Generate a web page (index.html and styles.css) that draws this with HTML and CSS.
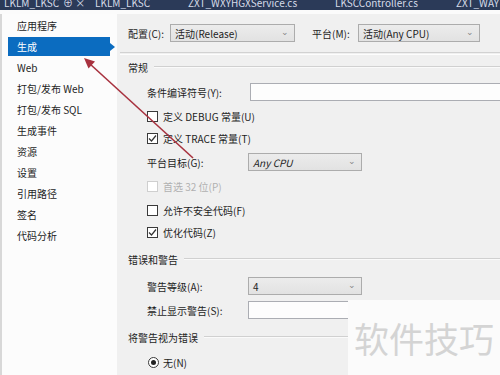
FILE: index.html
```html
<html>
<head>
<title>项目属性</title>
<link rel="stylesheet" href="styles.css">
</head>
<body>
<div class="page">
  <div class="tabs">
    <span class="tab t1">LKLM_LKSC</span>
    <span class="tab t2">⊕ ×</span>
    <span class="tab t3">LKLM_LKSC</span>
    <span class="tab t4">ZXT_WXYHGXService.cs</span>
    <span class="tab t5">LKSCController.cs</span>
    <span class="tab t6">ZXT_WAY</span>
  </div>
  <div class="strip"></div>
  <div class="content">
    <div class="side">
      <div class="item">应用程序</div>
      <div class="item sel">生成<span class="pointer"></span></div>
      <div class="item">Web</div>
      <div class="item">打包/发布 Web</div>
      <div class="item">打包/发布 SQL</div>
      <div class="item">生成事件</div>
      <div class="item">资源</div>
      <div class="item">设置</div>
      <div class="item">引用路径</div>
      <div class="item">签名</div>
      <div class="item">代码分析</div>
    </div>
    <div class="main">
      <div class="toprow">
        <span class="lbl-c">配置(C):</span>
        <div class="combo w-conf"><span>活动(Release)</span><span class="chev">⌄</span></div>
        <span class="lbl-m">平台(M):</span>
        <div class="combo w-plat"><span>活动(Any CPU)</span><span class="chev">⌄</span></div>
      </div>
      <div class="sep"></div>

      <div class="head h1"><span>常规</span><span class="line"></span></div>
      <div class="row r-cond"><span class="lbl">条件编译符号(Y):</span><div class="text w-cond"></div></div>
      <div class="row r6"><span class="box"></span><span>定义 DEBUG 常量(U)</span></div>
      <div class="row r4"><span class="box"><svg width="9" height="9" viewBox="0 0 9 9"><path d="M1 4.5 L3.5 7 L8 1.5" fill="none" stroke="#333" stroke-width="1.2"/></svg></span><span>定义 TRACE 常量(T)</span></div>
      <div class="row r6"><span class="lbl">平台目标(G):</span><div class="combo w-small"><span class="it">Any CPU</span><span class="chev">⌄</span></div></div>
      <div class="row r6 off"><span class="box"></span><span>首选 32 位(P)</span></div>
      <div class="row r6"><span class="box"></span><span>允许不安全代码(F)</span></div>
      <div class="row r4"><span class="box"><svg width="9" height="9" viewBox="0 0 9 9"><path d="M1 4.5 L3.5 7 L8 1.5" fill="none" stroke="#333" stroke-width="1.2"/></svg></span><span>优化代码(Z)</span></div>

      <div class="head h2"><span>错误和警告</span><span class="line"></span></div>
      <div class="row r11"><span class="lbl">警告等级(A):</span><div class="combo w-small"><span>4</span><span class="chev">⌄</span></div></div>
      <div class="row r6"><span class="lbl">禁止显示警告(S):</span><div class="text w-warn"></div></div>

      <div class="head h3"><span>将警告视为错误</span><span class="line"></span></div>
      <div class="row r9"><span class="radio"><span class="dot"></span></span><span>无(N)</span></div>
    </div>
  </div>

  <svg class="arrow" width="500" height="375" viewBox="0 0 500 375">
    <line x1="193" y1="158" x2="90" y2="64" stroke="#a8323f" stroke-width="1.6"/>
    <path d="M84 58 L95 61.5 L88.5 68.5 Z" fill="#a8323f"/>
  </svg>
  <div class="mark">软件技巧</div>
</div>
</body>
</html>
```
FILE: styles.css
```css
body{margin:0;
font-family:"Noto Sans CJK SC","Noto Sans",sans-serif;
font-size:10px;
color:#1e1e1e;}
.page{position:relative;width:500px;height:375px;overflow:hidden;background:#f0f0f0;}

.tabs{height:10px;background:#2b3a58;overflow:hidden;position:relative;}
.tab{position:absolute;top:-4px;color:#d6dce8;font-size:10px;line-height:13px;}
.t1{left:4px;}
.t2{left:63px;}
.t3{left:95px;}
.t4{left:188px;}
.t5{left:335px;}
.t6{left:456px;}
.strip{height:4px;background:#fbfbfb;}

.content{display:flex;height:361px;}
.side{width:117px;background:#fcfcfc;border-left:2px solid #d8d8d8;box-sizing:border-box;padding-top:1px;}
.item{position:relative;height:21px;line-height:21px;margin-left:6px;padding-left:9px;width:93px;}
.item.sel{background:#0b6cc0;color:#fff;height:19px;line-height:19px;margin-top:1px;margin-bottom:1px;}
.pointer{position:absolute;right:-5px;top:6px;width:0;height:0;
border-top:4px solid transparent;border-bottom:4px solid transparent;border-left:5px solid #0b6cc0;}

.main{flex:1;padding-top:10px;}
.toprow{display:flex;align-items:center;height:18px;padding-left:11px;}
.lbl-c{width:42px;}
.lbl-m{width:46px;margin-left:17px;}
.combo{display:flex;align-items:center;justify-content:space-between;box-sizing:border-box;height:18px;
border:1px solid #acacac;background:linear-gradient(#ececec,#e2e2e2);padding:0 5px 0 4px;}
.chev{color:#888;font-size:9px;line-height:9px;margin-top:-4px;}
.w-conf{width:125px;}
.w-plat{width:122px;}
.w-small{width:114px;}
.it{font-style:italic;}
.sep{margin-top:10px;height:1px;border-top:1px solid #d2d2d2;border-bottom:1px solid #fdfdfd;margin-left:3px;}

.head{display:flex;align-items:center;height:14px;padding-left:11px;}
.head .line{flex:1;margin-left:6px;border-top:1px solid #d0d0d0;border-bottom:1px solid #fafafa;}
.h1{margin-top:5px;}
.h2{margin-top:11px;}
.h3{margin-top:11px;}

.row{display:flex;align-items:center;height:18px;padding-left:30px;}
.r-cond{margin-top:9px;}
.r4{margin-top:4px;}
.r6{margin-top:6px;}
.r9{margin-top:9px;}
.r11{margin-top:11px;}
.lbl{width:101px;}
.r-cond .lbl{width:103px;}
.text{height:18px;box-sizing:border-box;border:1px solid #abadb3;background:#fdfdfd;}
.w-cond{flex:1;border-right:none;}
.w-warn{width:114px;}

.box{display:flex;align-items:center;justify-content:center;width:11px;height:11px;box-sizing:border-box;
border:1px solid #3a3a3a;background:#fff;margin-right:5px;}
.off{color:#b0b0b0;}
.off .box{border-color:#cfcfcf;}
.radio{display:flex;align-items:center;justify-content:center;width:11px;height:11px;box-sizing:border-box;
border:1px solid #3a3a3a;border-radius:50%;background:#fff;margin-right:4px;margin-left:1px;}
.dot{width:5px;height:5px;border-radius:50%;background:#222;}

.arrow{position:absolute;left:0;top:0;}
.mark{position:absolute;left:348px;top:300px;width:152px;height:75px;background:#fbfbfb;
color:#d4d4d4;font-size:35px;line-height:75px;text-align:center;}
```
